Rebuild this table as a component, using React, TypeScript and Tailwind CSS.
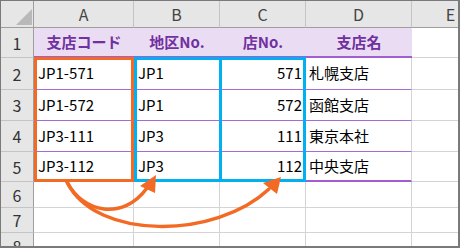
import React from "react";

const font = { fontFamily: '"Noto Sans CJK JP", "Noto Sans", sans-serif' };

const cols = ["A", "B", "C", "D", "E"];

const header = ["支店コード", "地区No.", "店No.", "支店名"];

const rows = [
  { code: "JP1-571", area: "JP1", no: "571", name: "札幌支店" },
  { code: "JP1-572", area: "JP1", no: "572", name: "函館支店" },
  { code: "JP3-111", area: "JP3", no: "111", name: "東京本社" },
  { code: "JP3-112", area: "JP3", no: "112", name: "中央支店" },
];

// same track sizes for the sheet and the outline layer above it
const tracks =
  "grid grid-cols-[33px_100px_86px_86px_106px_78px] grid-rows-[27px_30px_32px_31px_31px_30px_26px_25px_26px]";

const RowHead = ({ n }: { n: number }) => (
  <div className="flex items-center justify-center bg-[#e6e6e6] border-r border-r-[#9e9e9e] border-b border-b-[#c4c4c4] text-[16px] text-[#333]">
    {n}
  </div>
);

const Blank = () => <div className="border-r border-b border-[#d4d4d4]" />;

const Arrows = () => (
  <svg
    className="absolute inset-0 pointer-events-none"
    width={460}
    height={248}
    viewBox="0 0 460 248"
  >
    <g fill="none" stroke="#f26a23" strokeWidth={3.5} strokeLinecap="round">
      <path d="M66 181 C82 212 122 220 146 187" />
      <path d="M66 181 C95 240 215 238 268 188" />
    </g>
    <g fill="#f26a23">
      <polygon points="155,174 139,185 154,192" />
      <polygon points="280,176 262,182 276,193" />
    </g>
  </svg>
);

export default function App() {
  return (
    <div
      className="relative w-[460px] h-[248px] overflow-hidden bg-white border-l border-t border-r-2 border-b-2 border-[#7a7a7a]"
      style={font}
    >
      <div className={tracks}>
        {/* corner */}
        <div className="relative bg-[#e6e6e6] border-r border-b border-[#9e9e9e]">
          <svg className="absolute left-0 top-0" width={32} height={26}>
            <polygon points="15,24 31,24 31,8" fill="#b9b9b9" />
          </svg>
        </div>
        {cols.map((c) => (
          <div
            key={c}
            className="flex items-center justify-center bg-[#e6e6e6] border-r border-r-[#c4c4c4] border-b border-b-[#9e9e9e] text-[16px] text-[#444]"
          >
            {c}
          </div>
        ))}

        {/* row 1: table header */}
        <RowHead n={1} />
        {header.map((h) => (
          <div
            key={h}
            className="flex items-center justify-center bg-[#eadcf3] border-b-2 border-b-[#a05ed0] text-[15px] font-bold text-[#7030a0]"
          >
            {h}
          </div>
        ))}
        <div className="border-r border-b border-[#d4d4d4]" />

        {/* data rows */}
        {rows.map((r, i) => {
          const line =
            i === rows.length - 1
              ? "border-b-2 border-b-[#a05ed0]"
              : "border-b border-b-[#a86ad4]";
          return (
            <React.Fragment key={r.code}>
              <RowHead n={i + 2} />
              <div className={`flex items-center pl-1 text-[15px] text-black ${line}`}>{r.code}</div>
              <div className={`flex items-center pl-1 text-[15px] text-black ${line}`}>{r.area}</div>
              <div className={`flex items-center justify-end pr-1 text-[15px] text-black ${line}`}>{r.no}</div>
              <div className={`flex items-center pl-[3px] text-[15px] text-black border-r border-r-[#d4d4d4] ${line}`}>
                {r.name}
              </div>
              <Blank />
            </React.Fragment>
          );
        })}

        {/* empty rows */}
        {[6, 7, 8].map((n) => (
          <React.Fragment key={n}>
            <RowHead n={n} />
            <Blank />
            <Blank />
            <Blank />
            <Blank />
            <Blank />
          </React.Fragment>
        ))}
      </div>

      {/* range outlines */}
      <div className={`absolute inset-0 pointer-events-none ${tracks}`}>
        <div className="col-start-2 row-start-3 row-span-4 -mt-px border-[3px] border-[#f26a23]" />
        <div className="col-start-3 col-span-2 row-start-3 row-span-4 -mt-px border-[3px] border-[#00b0f0]" />
        <div className="col-start-4 row-start-3 row-span-4 -mt-px -ml-px border-l-[3px] border-[#00b0f0]" />
      </div>
      <Arrows />
    </div>
  );
}
